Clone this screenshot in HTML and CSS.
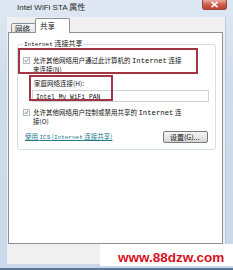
FILE: index.html
```html
<!DOCTYPE html>
<html>
<head>
<meta charset="utf-8">
<link rel="stylesheet" href="styles.css">
</head>
<body>
<div class="window">
  <div class="titlebar">
    <span class="title">Intel WiFi STA 属性</span>
    <span class="close"><svg width="9" height="7" viewBox="0 0 9 7"><path d="M1.5 0.8 L7.5 6.2 M7.5 0.8 L1.5 6.2" stroke="#fff" stroke-width="1.6"/></svg></span>
  </div>
  <div class="client">
    <div class="tabs">
      <div class="tab">网络</div>
      <div class="tab active">共享</div>
    </div>
    <div class="panel">
      <fieldset class="group">
        <legend class="group-title"><span class="mono small">Internet</span> 连接共享</legend>
        <div class="check first">
          <span class="box"><svg width="7" height="7" viewBox="0 0 7 7"><path d="M1.2 3.6 L2.8 5.4 L5.9 1.2" stroke="#6b7684" stroke-width="1.1" fill="none"/></svg></span>
          <span class="check-text">允许其他网络用户通过此计算机的 <span class="mono">Internet</span> 连接<br>来连接(N)</span>
        </div>
        <div class="field-label">家庭网络连接(H):</div>
        <div class="combo"><span class="mono combo-text">Intel My WiFi PAN</span></div>
        <div class="check second">
          <span class="box"><svg width="7" height="7" viewBox="0 0 7 7"><path d="M1.2 3.6 L2.8 5.4 L5.9 1.2" stroke="#6b7684" stroke-width="1.1" fill="none"/></svg></span>
          <span class="check-text">允许其他网络用户控制或禁用共享的 <span class="mono">Internet</span> 连<br>接(O)</span>
        </div>
        <div class="action-row">
          <a class="link">使用 <span class="mono">ICS</span> (<span class="mono">Internet</span> 连接共享)</a>
          <span class="button">设置(G)...</span>
        </div>
      </fieldset>
      <div class="highlight hl-one"></div>
      <div class="highlight hl-two"></div>
    </div>
  </div>
  <div class="watermark"><span class="wm-text">www.88dzw.com</span></div>
</div>
</body>
</html>
```

FILE: styles.css
```css
* { box-sizing: border-box; margin: 0; padding: 0; }
html, body { width: 233px; height: 270px; overflow: hidden; }
body {
  font-family: "Noto Sans CJK SC", "Liberation Sans", sans-serif;
  font-size: 6.5px;
  line-height: 8px;
  color: #111;
  background: #c7d7ea;
}
.window {
  position: relative;
  width: 233px;
  height: 270px;
  display: flex;
  flex-direction: column;
  background: linear-gradient(180deg, #dfe8f3 0%, #cfdcec 30%, #c9d8ea 100%);
  border-bottom: 2px solid #5d7597;
}
.titlebar {
  height: 17px;
  display: flex;
  align-items: flex-start;
  padding-left: 17px;
}
.title {
  font-family: "Liberation Sans", "Noto Sans CJK SC", sans-serif;
  font-size: 8px;
  line-height: 9px;
  margin-top: 3px;
  color: #2a2a2a;
}
.close {
  margin-left: auto;
  margin-right: 6px;
  width: 25px;
  height: 10px;
  border-radius: 0 0 3px 3px;
  background: linear-gradient(180deg, #e9a89c 0%, #d0614f 50%, #c0402e 100%);
  border: 1px solid #8e4a45;
  border-top: none;
  display: flex;
  align-items: center;
  justify-content: center;
}
.client {
  margin-left: 7px;
  width: 219px;
  height: 247px;
  background: #f0f0f0;
  padding: 1px 3px 0 1px;
  display: flex;
  flex-direction: column;
  border-right: 1px solid #b7c8dc;
}
.tabs {
  display: flex;
  align-items: flex-end;
  height: 15px;
  margin-bottom: -1px;
  padding-left: 3px;
}
.tab {
  font-size: 7.5px;
  line-height: 9px;
  height: 10px;
  width: 25px;
  padding-left: 3px;
  border: 1px solid #8d9094;
  border-bottom: none;
  background: linear-gradient(180deg, #f5f5f5, #e3e3e3);
  border-radius: 2px 2px 0 0;
  color: #222;
}
.tab.active {
  position: relative;
  z-index: 1;
  height: 15px;
  width: 35px;
  padding-left: 4px;
  padding-top: 2px;
  background: #fff;
  margin-left: -1px;
}
.panel {
  position: relative;
  width: 215px;
  height: 212px;
  background: #fff;
  border: 1px solid #8d9094;
}
.group {
  margin: 6px 6px 0 8px;
  width: 199px;
  border: 1px solid #d3dde4;
  border-radius: 3px;
  padding: 0 5px 6px 5px;
}
.group-title {
  padding: 0 1px;
  font-size: 7px;
  line-height: 8px;
}
.mono {
  font-family: "Liberation Mono", monospace;
  font-size: 7.3px;
}
.mono.small { font-size: 6px; }
.check {
  display: flex;
  align-items: flex-start;
  gap: 3px;
}
.check.first { margin-top: 7px; }
.check.second { margin-top: 6px; }
.box {
  width: 7px;
  height: 7px;
  margin-top: 1px;
  border: 1px solid #b4bcc6;
  background: #f4f6f9;
  display: flex;
  align-items: center;
  justify-content: center;
  flex: none;
}
.box svg { display: block; }
.check-text { white-space: nowrap; }
.field-label { margin-top: 6px; padding-left: 11px; }
.combo {
  margin-top: 3px;
  margin-left: 9px;
  width: 177px;
  height: 12px;
  border: 1px solid #d0d4da;
  padding-left: 3px;
  line-height: 10px;
}
.combo-text { font-size: 6.3px; }
.action-row {
  margin-top: 6px;
  display: flex;
  align-items: flex-start;
}
.link {
  margin-left: 2px;
  margin-top: 1px;
  color: #23788c;
  text-decoration: underline;
  white-space: nowrap;
}
.link .mono { font-size: 6px; }
.button {
  margin-left: auto;
  margin-right: 2px;
  width: 45px;
  height: 12px;
  border: 1px solid #7a7a7a;
  border-radius: 2px;
  background: linear-gradient(180deg, #f4f4f4 0%, #e6e6e6 50%, #d6d6d6 100%);
  line-height: 10px;
  padding-left: 6px;
  font-size: 7px;
}
.highlight {
  position: absolute;
  border: 2px solid #a33444;
}
.hl-one { left: 9px; top: 15px; width: 180px; height: 26px; }
.hl-two { left: 20px; top: 42px; width: 84px; height: 26px; }
.watermark {
  position: absolute;
  left: 100px;
  top: 244px;
  width: 133px;
  height: 22px;
  background: #fff;
  display: flex;
  align-items: center;
  padding-left: 18px;
}
.wm-text {
  font-family: "Liberation Sans", sans-serif;
  font-weight: bold;
  font-size: 13.5px;
  color: #d9101e;
  line-height: 14px;
  margin-top: 5px;
  white-space: nowrap;
}
```
